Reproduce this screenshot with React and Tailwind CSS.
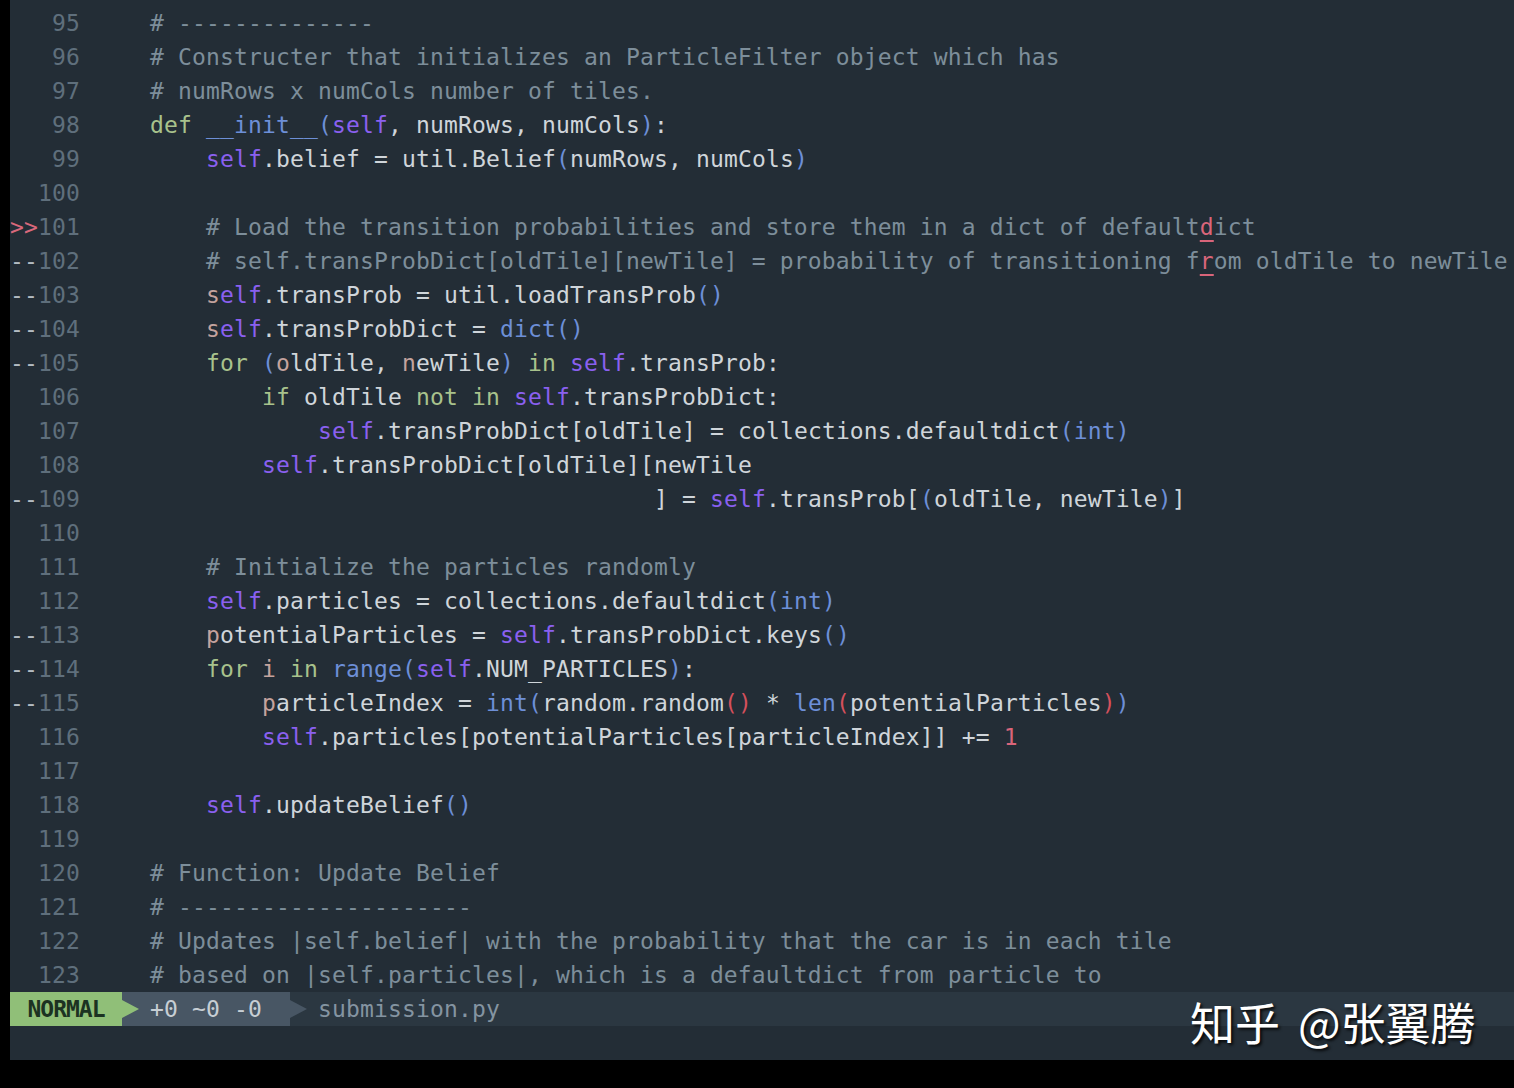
const N = "text-[#cfd5da]";
const C = "text-[#7d8e9a]";
const K = "text-[#a8c28c]";
const S = "text-[#8a60ef]";
const B = "text-[#6d8fd7]";
const R = "text-[#d4505c]";
const P = "text-[#d9657a]";
const T = "text-[#c4a39e]";
const U = "text-[#d9657a] underline decoration-[#d9657a] underline-offset-[5px] decoration-2";

const lines = [
  { n: 95, t: [["    # --------------", C]] },
  { n: 96, t: [["    # Constructer that initializes an ParticleFilter object which has", C]] },
  { n: 97, t: [["    # numRows x numCols number of tiles.", C]] },
  {
    n: 98,
    t: [["    ", N], ["def", K], [" ", N], ["__init__", B], ["(", B], ["self", S], [", numRows, numCols", N], [")", B], [":", N]],
  },
  { n: 99, t: [["        ", N], ["self", S], [".belief = util.Belief", N], ["(", B], ["numRows, numCols", N], [")", B]] },
  { n: 100, t: [] },
  {
    n: 101,
    sign: ">>",
    t: [["        # Load the transition probabilities and store them in a dict of default", C], ["d", U], ["ict", C]],
  },
  {
    n: 102,
    sign: "--",
    t: [["        # self.transProbDict[oldTile][newTile] = probability of transitioning f", C], ["r", U], ["om oldTile to newTile", C]],
  },
  { n: 103, sign: "--", t: [["        ", N], ["s", T], ["elf", S], [".transProb = util.loadTransProb", N], ["()", B]] },
  { n: 104, sign: "--", t: [["        ", N], ["s", T], ["elf", S], [".transProbDict = ", N], ["dict()", B]] },
  {
    n: 105,
    sign: "--",
    t: [["        ", N], ["for", K], [" ", N], ["(", B], ["o", T], ["ldTile, ", N], ["n", T], ["ewTile", N], [")", B], [" ", N], ["in", K], [" ", N], ["self", S], [".transProb:", N]],
  },
  {
    n: 106,
    t: [["            ", N], ["if", K], [" oldTile ", N], ["not", K], [" ", N], ["in", K], [" ", N], ["self", S], [".transProbDict:", N]],
  },
  {
    n: 107,
    t: [["                ", N], ["self", S], [".transProbDict[oldTile] = collections.defaultdict", N], ["(int)", B]],
  },
  { n: 108, t: [["            ", N], ["self", S], [".transProbDict[oldTile][newTile", N]] },
  {
    n: 109,
    sign: "--",
    t: [["                                        ] = ", N], ["self", S], [".transProb[", N], ["(", B], ["oldTile, newTile", N], [")", B], ["]", N]],
  },
  { n: 110, t: [] },
  { n: 111, t: [["        # Initialize the particles randomly", C]] },
  { n: 112, t: [["        ", N], ["self", S], [".particles = collections.defaultdict", N], ["(int)", B]] },
  {
    n: 113,
    sign: "--",
    t: [["        ", N], ["p", T], ["otentialParticles = ", N], ["self", S], [".transProbDict.keys", N], ["()", B]],
  },
  {
    n: 114,
    sign: "--",
    t: [["        ", N], ["for", K], [" ", N], ["i", T], [" ", N], ["in", K], [" ", N], ["range(", B], ["self", S], [".NUM_PARTICLES", N], [")", B], [":", N]],
  },
  {
    n: 115,
    sign: "--",
    t: [["            ", N], ["p", T], ["articleIndex = ", N], ["int(", B], ["random.random", N], ["()", R], [" * ", N], ["len", B], ["(", R], ["potentialParticles", N], [")", R], [")", B]],
  },
  { n: 116, t: [["            ", N], ["self", S], [".particles[potentialParticles[particleIndex]] += ", N], ["1", P]] },
  { n: 117, t: [] },
  { n: 118, t: [["        ", N], ["self", S], [".updateBelief", N], ["()", B]] },
  { n: 119, t: [] },
  { n: 120, t: [["    # Function: Update Belief", C]] },
  { n: 121, t: [["    # ---------------------", C]] },
  { n: 122, t: [["    # Updates |self.belief| with the probability that the car is in each tile", C]] },
  { n: 123, t: [["    # based on |self.particles|, which is a defaultdict from particle to", C]] },
];

function Line({ line }) {
  return (
    <div className="flex h-[34px] items-center whitespace-pre">
      <span className={`w-[28px] ${line.sign === ">>" ? "text-[#d9687b]" : "text-[#b3bbc2]"}`}>{line.sign || ""}</span>
      <span className="w-[42px] text-right text-[#5f6f7c]">{line.n}</span>
      <span className="ml-[14px]">
        {line.t.map(([text, cls], i) => (
          <span key={i} className={cls}>
            {text}
          </span>
        ))}
      </span>
    </div>
  );
}

export default function App() {
  return (
    <div className="relative flex w-[1514px] h-[1088px] bg-black overflow-hidden font-['DejaVu_Sans_Mono',monospace] text-[23px] tracking-[0.15px]">
      <div className="w-[10px] shrink-0" />
      <div className="flex flex-1 flex-col">
        <div className="bg-[#232d36] pt-[6px]">
          {lines.map((l) => (
            <Line key={l.n} line={l} />
          ))}
        </div>
        <div className="flex h-[34px] items-center bg-[#2b3741] whitespace-pre">
          <div className="flex h-full w-[112px] items-center justify-center bg-[#90bf78] font-bold tracking-[-1px] text-[#1c3222]">NORMAL</div>
          <div className="flex h-full w-[168px] items-center bg-[#485664]">
            <svg width="18" height="34" viewBox="0 0 18 34" className="shrink-0">
              <path d="M0 8 L17 17 L0 26 Z" fill="#90bf78" />
            </svg>
            <span className="ml-[10px] text-[#c7ced4]">+0 ~0 -0</span>
          </div>
          <svg width="20" height="34" viewBox="0 0 20 34" className="shrink-0">
            <path d="M0 8 L17 17 L0 26 Z" fill="#485664" />
          </svg>
          <span className="ml-[8px] text-[#8494a1]">submission.py</span>
        </div>
        <div className="h-[34px] bg-[#232d36]" />
        <div className="flex-1 bg-black" />
      </div>
      <div className="absolute left-[1190px] top-[988px] font-['Noto_Sans_CJK_SC',sans-serif] text-[45px] tracking-normal text-white [text-shadow:2px_2px_3px_rgba(0,0,0,0.85)]">
        知乎<span className="ml-[18px]">@张翼腾</span>
      </div>
    </div>
  );
}
